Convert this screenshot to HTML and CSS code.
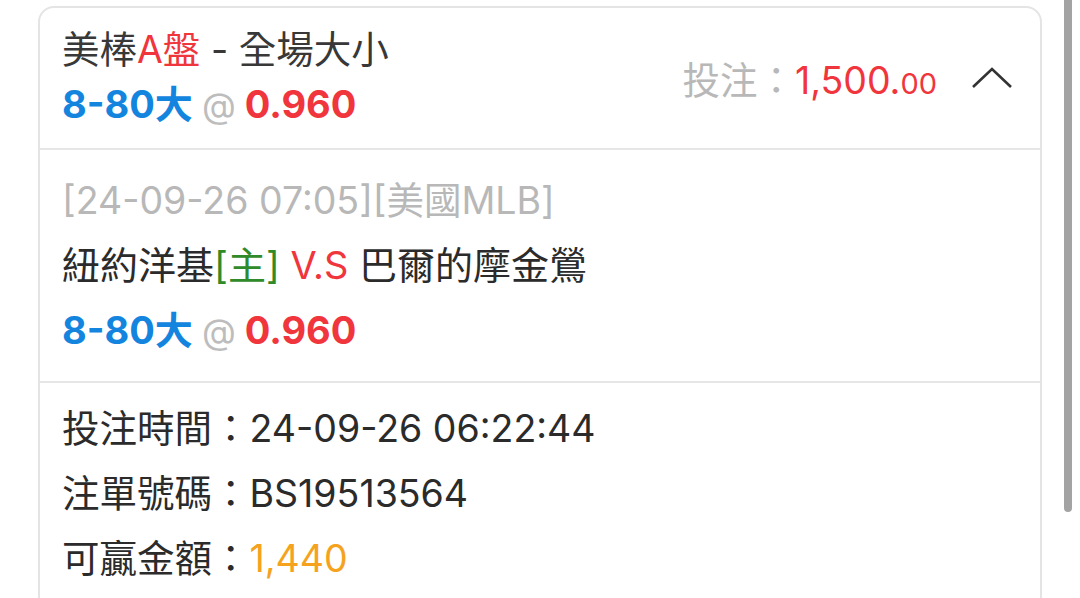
FILE: index.html
```html
<!DOCTYPE html>
<html lang="zh-Hant">
<head>
  <meta charset="UTF-8" />
  <meta name="viewport" content="width=device-width, initial-scale=1" />
  <title>注單詳情</title>
  <link rel="stylesheet" href="styles.css">
</head>
<body>
  <div class="card">
    <div class="card-head">
      <div class="head-left">
        <div class="title">美棒<span class="red">A盤</span> - 全場大小</div>
        <div class="odds"><span class="blue">8-80大</span> <span class="at">@</span> <span class="red">0.960</span></div>
      </div>
      <div class="head-right">
        <div class="stake">投注：<span class="red">1,500.<small>00</small></span></div>
        <svg class="chevron" width="42" height="22" viewBox="0 0 42 22">
          <path d="M2 20 L21 2 L40 20" fill="none" stroke="#333" stroke-width="2.6" />
        </svg>
      </div>
    </div>

    <div class="card-match">
      <div class="match-time">[24-09-26 07:05][美國MLB]</div>
      <div class="teams">紐約洋基<span class="green">[主]</span> <span class="red">V.S</span> 巴爾的摩金鶯</div>
      <div class="odds"><span class="blue">8-80大</span> <span class="at">@</span> <span class="red">0.960</span></div>
    </div>

    <div class="card-info">
      <div class="info-row">投注時間：24-09-26 06:22:44</div>
      <div class="info-row">注單號碼：BS19513564</div>
      <div class="info-row">可贏金額：<span class="orange">1,440</span></div>
    </div>
  </div>

  <div class="scroll-indicator"></div>
</body>
</html>
```

FILE: styles.css
```css
body {
  margin: 0;
  background: #fff;
  color: #333;
  font-family: Inter, "Noto Sans CJK TC", sans-serif;
  overflow: hidden;
}
.card {
  box-sizing: border-box;
  width: 1004px;
  margin: 6px 0 0 38px;
  border: 2px solid #e4e4e4;
  border-radius: 16px;
  min-height: 700px;
}
.card-head {
  display: flex;
  justify-content: space-between;
  align-items: center;
  padding: 14px 27px 15px 22px;
  border-bottom: 2px solid #e6e6e6;
}
.title {
  font-size: 37.5px;
  line-height: 55px;
  color: #383838;
}
.odds {
  font-size: 38px;
  line-height: 55px;
  font-weight: bold;
}
.odds .at {
  font-weight: normal;
  color: #bdbdbd;
  font-size: 35px;
}
.head-right {
  display: flex;
  align-items: center;
  gap: 34px;
}
.stake {
  font-size: 37.5px;
  color: #b8b8b8;
}
.stake small {
  font-size: 29px;
}
.red { color: #f0353d; }
.blue { color: #1385df; }
.green { color: #2f8a2a; }
.orange { color: #f5a21e; }

.card-match {
  padding: 18px 22px 17px;
  border-bottom: 2px solid #e6e6e6;
  font-size: 38px;
  line-height: 65px;
}
.card-match .odds {
  line-height: 65px;
}
.match-time {
  color: #b8b8b8;
  font-size: 37.5px;
}
.teams {
  color: #2b2b2b;
}
.card-info {
  padding: 13px 22px;
}
.info-row {
  font-size: 37.5px;
  line-height: 65px;
  color: #2b2b2b;
}
.scroll-indicator {
  position: fixed;
  top: 0;
  right: 8px;
  width: 8px;
  height: 512px;
  background: #a3a3a3;
  border-radius: 0 0 4px 4px;
}
```
